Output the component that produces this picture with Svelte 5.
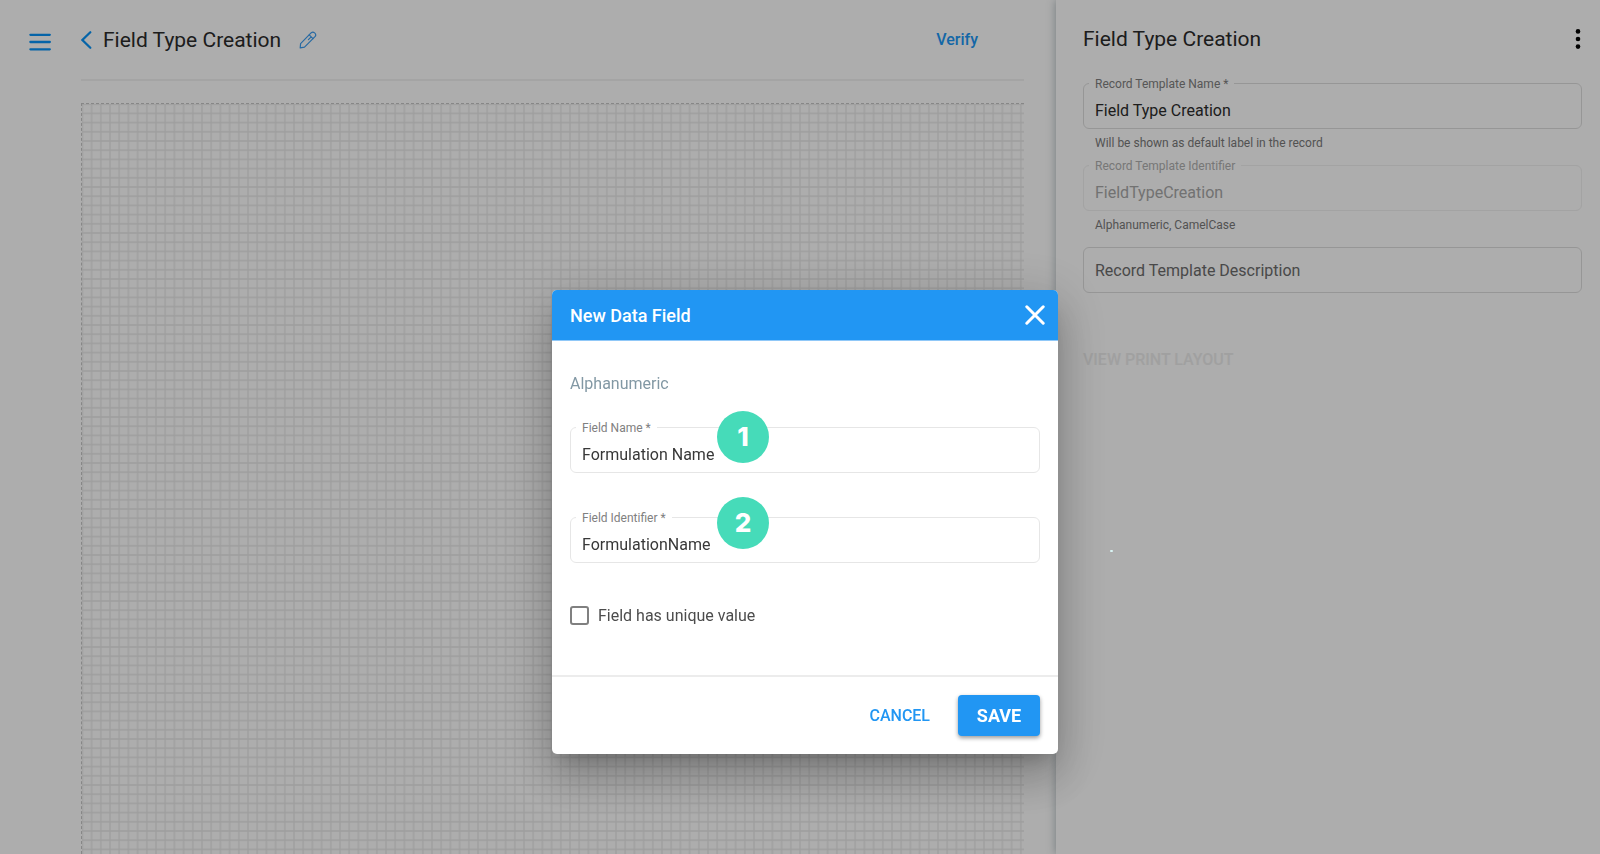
<script>
    let templateName = 'Field Type Creation';
    let templateId = 'FieldTypeCreation';
    let description = '';

    let fieldName = 'Formulation Name';
    let fieldId = 'FormulationName';
    let unique = false;

    let open = true;

    const close = () => {
        open = false;
    }
</script>

<svelte:head>
    <title>Field Type Creation</title>
</svelte:head>

<div class="page">
    <main class="editor">
        <button class="icon menu" aria-label="Menu">
            <svg width="22" height="20" viewBox="0 0 22 20">
                <path d="M1.4 2.8H20.8M1.4 10H20.8M1.4 17.3H20.8" stroke="#0894f8" stroke-width="2.3" stroke-linecap="round" />
            </svg>
        </button>
        <div class="work">
            <header class="top">
                <button class="icon" aria-label="Back">
                    <svg width="11" height="18" viewBox="0 0 11 18">
                        <path d="M9.3 1.2L1.4 9L9.3 16.8" fill="none" stroke="#0894f8" stroke-width="2.2" stroke-linecap="round" />
                    </svg>
                </button>
                <h1>{templateName}</h1>
                <button class="icon" aria-label="Edit name">
                    <svg width="18" height="18" viewBox="0 0 18 18" fill="none" stroke="#3c9df0" stroke-width="1.2" stroke-linejoin="round" stroke-linecap="round">
                        <path d="M1.2 16.8L1.6 12.6L12.3 1.7Q13.9 .4 15.6 1.9Q17.5 3.7 16.2 5.4L5.5 16.2Z" />
                        <path d="M10.2 3.9L14 7.7M12.2 5.8L9.4 8.6" />
                    </svg>
                </button>
                <button class="verify">Verify</button>
            </header>
            <div class="canvas">
                <svg width="100%" height="100%" aria-hidden="true">
                    <defs>
                        <pattern id="grid" x="0.4" y="0.2" width="9.2" height="9.2" patternUnits="userSpaceOnUse">
                            <path d="M9.2 0V9.2M0 9.2H9.2M0 0V9.2M0 0H9.2" stroke="#e8e8e8" stroke-width="1.2" />
                        </pattern>
                    </defs>
                    <rect width="100%" height="100%" fill="url(#grid)" />
                </svg>
            </div>
        </div>
    </main>

    <aside class="side">
        <div class="side-top">
            <h2>{templateName}</h2>
            <button class="icon" aria-label="More">
                <svg width="6" height="22" viewBox="0 0 6 22">
                    <circle cx="3" cy="3.4" r="2.3" />
                    <circle cx="3" cy="11" r="2.3" />
                    <circle cx="3" cy="18.6" r="2.3" />
                </svg>
            </button>
        </div>
        <div class="field">
            <label for="tname">Record Template Name *</label>
            <input id="tname" type="text" bind:value={templateName}>
        </div>
        <p class="hint">Will be shown as default label in the record</p>
        <div class="field off">
            <label for="tid">Record Template Identifier</label>
            <input id="tid" type="text" disabled bind:value={templateId}>
        </div>
        <p class="hint">Alphanumeric, CamelCase</p>
        <div class="field last">
            <input type="text" aria-label="Record Template Description" placeholder="Record Template Description" bind:value={description}>
        </div>
        <button class="print" disabled>VIEW PRINT LAYOUT</button>
    </aside>
</div>

{#if open}
<div class="overlay">
    <form class="dialog" on:submit|preventDefault={close}>
        <header class="head">
            <h2>New Data Field</h2>
            <button class="icon" type="button" aria-label="Close" on:click={close}>
                <svg width="20" height="20" viewBox="0 0 20 20">
                    <path d="M1.8 1.8L18.2 18.2M18.2 1.8L1.8 18.2" stroke="#fff" stroke-width="3" stroke-linecap="round" />
                </svg>
            </button>
        </header>
        <div class="body">
            <p class="kind">Alphanumeric</p>
            <div class="field">
                <label for="fname">Field Name *</label>
                <input id="fname" type="text" bind:value={fieldName}>
                <span class="step">1</span>
            </div>
            <div class="field">
                <label for="fid">Field Identifier *</label>
                <input id="fid" type="text" bind:value={fieldId}>
                <span class="step second">2</span>
            </div>
            <label class="check">
                <input type="checkbox" bind:checked={unique}>
                Field has unique value
            </label>
        </div>
        <footer class="foot">
            <button class="cancel" type="button" on:click={close}>CANCEL</button>
            <button class="save" type="submit">SAVE</button>
        </footer>
    </form>
    <span class="spark"></span>
</div>
{/if}

<style>
    :global(body) {
        background: #fff;
        font-family: Roboto, "Liberation Sans", sans-serif;
        color: #2c2c2c;
    }

    h1, h2, p {
        margin: 0;
        font-weight: 400;
    }

    button, input {
        font-family: inherit;
        box-sizing: border-box;
    }

    button {
        border: none;
        background: none;
        padding: 0;
        cursor: pointer;
    }

    .icon {
        display: flex;
    }

    .page {
        display: flex;
        min-height: 100vh;
    }

    .editor {
        flex: 1;
        display: flex;
        align-items: flex-start;
        gap: 30px;
        padding: 0 32px 0 29px;
    }

    .menu {
        margin-top: 32px;
    }

    .work {
        flex: 1;
        display: flex;
        flex-direction: column;
        align-self: stretch;
    }

    .top {
        display: flex;
        align-items: center;
        height: 79px;
        border-bottom: 2px solid #f2f2f2;
    }

    .top h1 {
        margin: 0 18px 0 11px;
    }

    h1, .side-top h2 {
        font-size: 21px;
        line-height: 28px;
    }

    .verify {
        margin: 0 46px 0 auto;
        color: #1c98f6;
        font-size: 16px;
        font-weight: 500;
    }

    .canvas {
        flex: 1;
        display: flex;
        margin-top: 22px;
        border-top: 1px dashed #c8c8c8;
        border-left: 1px dashed #c8c8c8;
    }

    .side {
        width: 34%;
        box-sizing: border-box;
        padding: 0 18px 0 27px;
        background: #fff;
        box-shadow: -1px 0 8px rgba(55, 80, 90, .35);
    }

    .side-top {
        display: flex;
        align-items: center;
        justify-content: space-between;
        height: 78px;
        margin-bottom: 5px;
    }

    .side-top .icon {
        margin-right: 1px;
    }

    .field {
        position: relative;
    }

    .field label {
        position: absolute;
        top: -7px;
        left: 6px;
        padding: 0 6px;
        background: #fff;
        color: #808080;
        font-size: 12px;
        line-height: 16px;
    }

    .field input {
        display: block;
        width: 100%;
        height: 46px;
        padding: 8px 11px 0;
        border: 1px solid #dedede;
        border-radius: 6px;
        background: #fff;
        color: #2c2c2c;
        font-size: 16px;
        outline: none;
    }

    .field.off label {
        color: #b0b0b0;
    }

    .field.off input {
        border-color: #f0f0f0;
        color: #a8a8a8;
    }

    .field.last input {
        padding-top: 0;
    }

    .field input::placeholder {
        color: #6c6c6c;
        opacity: 1;
    }

    .hint {
        padding: 6px 12px 14px;
        color: #7a7a7a;
        font-size: 12px;
        line-height: 16px;
    }

    .field.last {
        margin-bottom: 55px;
    }

    .print {
        color: #ececec;
        font-size: 16px;
        font-weight: 500;
        line-height: 24px;
    }

    .overlay {
        position: fixed;
        inset: 0;
        box-sizing: border-box;
        display: flex;
        justify-content: center;
        align-items: flex-start;
        padding: 290px 0 0 10px;
        background: rgba(0, 0, 0, .32);
    }

    .dialog {
        width: 506px;
        border-radius: 5px;
        background: #fff;
        box-shadow: 0 12px 17px -8px rgba(0, 0, 0, .2), 0 26px 42px 3px rgba(0, 0, 0, .14), 0 10px 50px 9px rgba(0, 0, 0, .14);
    }

    .head {
        display: flex;
        align-items: center;
        justify-content: space-between;
        height: 50px;
        padding: 0 13px 0 18px;
        border-bottom: 1px solid #90c8f8;
        border-radius: 5px 5px 0 0;
        background: #2196f3;
    }

    .head h2 {
        color: #fff;
        font-size: 18px;
        font-weight: 500;
    }

    .body {
        padding: 32px 18px 50px;
    }

    .kind {
        margin-bottom: 32px;
        color: #8298a4;
        font-size: 16px;
        line-height: 22px;
    }

    .body .field {
        margin-bottom: 44px;
    }

    .body .field input {
        border-color: #e6e6e6;
        color: #383838;
    }

    .step {
        position: absolute;
        top: -16px;
        left: 147px;
        width: 52px;
        border-radius: 50%;
        background: #46dbb9;
        color: #fff;
        font-family: Inter, "Open Sans", sans-serif;
        font-size: 26px;
        font-weight: 800;
        line-height: 52px;
        text-align: center;
    }

    .step.second {
        top: -20px;
    }

    .check {
        display: flex;
        align-items: center;
        gap: 9px;
        margin-top: -1px;
        color: #4c4c4c;
        font-size: 16px;
        line-height: 16px;
    }

    .check input {
        appearance: none;
        width: 19px;
        height: 19px;
        margin: 0;
        border: 2px solid #808080;
        border-radius: 3px;
    }

    .check input:checked {
        background: #2196f3;
    }

    .foot {
        display: flex;
        align-items: center;
        justify-content: flex-end;
        gap: 28px;
        padding: 18px;
        border-top: 2px solid #ececec;
    }

    .cancel {
        color: #2196f3;
        font-size: 16px;
        font-weight: 500;
    }

    .save {
        width: 82px;
        height: 41px;
        border-radius: 4px;
        background: #2196f3;
        box-shadow: 0 2px 4px rgba(0, 0, 0, .4);
        color: #fff;
        font-size: 18px;
        font-weight: 700;
    }

    .spark {
        position: absolute;
        top: 550px;
        right: 487px;
        width: 3px;
        height: 2px;
        border-radius: 1px;
        background: #d9f4f4;
    }
</style>
